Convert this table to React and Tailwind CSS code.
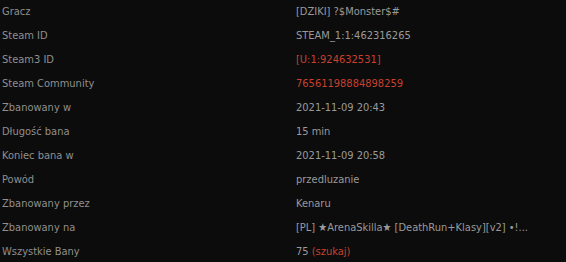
const rows = [
  { label: 'Gracz', value: '[DZIKI] ?$Monster$#' },
  { label: 'Steam ID', value: 'STEAM_1:1:462316265' },
  { label: 'Steam3 ID', value: '[U:1:924632531]', red: true },
  { label: 'Steam Community', value: '76561198884898259', red: true },
  { label: 'Zbanowany w', value: '2021-11-09 20:43' },
  { label: 'Długość bana', value: '15 min' },
  { label: 'Koniec bana w', value: '2021-11-09 20:58' },
  { label: 'Powód', value: 'przedluzanie' },
  { label: 'Zbanowany przez', value: 'Kenaru' },
  { label: 'Zbanowany na', value: '[PL] ★ArenaSkilla★ [DeathRun+Klasy][v2] •!...' },
]

export default function App() {
  return (
    <div className="w-[566px] h-[262px] overflow-hidden bg-[#0c0c0c] text-[11px] text-[#9a9a9a] font-['DejaVu_Sans_Condensed','DejaVu_Sans',Verdana,sans-serif]">
      {rows.map((row) => (
        <div key={row.label} className="flex h-6 items-center">
          <div className="w-[296px] pl-[2px] text-[#8f8f8f]">{row.label}</div>
          <div className={`whitespace-nowrap ${row.red ? 'text-[#c8402e]' : ''}`}>{row.value}</div>
        </div>
      ))}
      <div className="flex h-6 items-center">
        <div className="w-[296px] pl-[2px] text-[#8f8f8f]">Wszystkie Bany</div>
        <div>
          75 <span className="text-[#c8402e]">(szukaj)</span>
        </div>
      </div>
    </div>
  )
}
